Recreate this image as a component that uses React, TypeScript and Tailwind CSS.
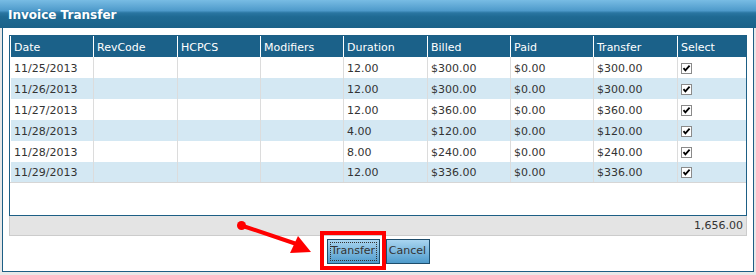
const rows = [
  { date: '11/25/2013', duration: '12.00', billed: '$300.00', paid: '$0.00', transfer: '$300.00' },
  { date: '11/26/2013', duration: '12.00', billed: '$300.00', paid: '$0.00', transfer: '$300.00' },
  { date: '11/27/2013', duration: '12.00', billed: '$360.00', paid: '$0.00', transfer: '$360.00' },
  { date: '11/28/2013', duration: '4.00', billed: '$120.00', paid: '$0.00', transfer: '$120.00' },
  { date: '11/28/2013', duration: '8.00', billed: '$240.00', paid: '$0.00', transfer: '$240.00' },
  { date: '11/29/2013', duration: '12.00', billed: '$336.00', paid: '$0.00', transfer: '$336.00' },
]

const headers = ['Date', 'RevCode', 'HCPCS', 'Modifiers', 'Duration', 'Billed', 'Paid', 'Transfer', 'Select']
const widths = ['w-[83px]', 'w-[84px]', 'w-[83px]', 'w-[83px]', 'w-[84px]', 'w-[83px]', 'w-[83px]', 'w-[84px]', 'w-[69px]']

function CheckBox() {
  return (
    <svg width="11" height="11" viewBox="0 0 11 11">
      <rect x="0.5" y="0.5" width="10" height="10" fill="#fff" stroke="#8a8a8a" />
      <path d="M2.5 5.2 L4.4 7.4 L8.6 2.6" fill="none" stroke="#000" strokeWidth="1.8" />
    </svg>
  )
}

export default function App() {
  return (
    <div
      className="relative w-[756px] h-[275px] bg-[#e8e8e8] overflow-hidden text-[11px] text-[#333]"
      style={{ fontFamily: '"DejaVu Sans", Verdana, sans-serif' }}
    >
      <div className="h-[28px] flex items-center pl-2 pt-[2px] bg-[linear-gradient(to_bottom,#78bce4_0%,#4e9aca_38%,#2a76a2_46%,#1f6a93_60%,#1b6289_100%)]">
        <span className="text-white font-bold text-[12px]">Invoice Transfer</span>
      </div>

      <div className="mx-[2px] h-[244px] bg-white border-x border-b border-[#1d5f85] pt-[7px] px-[6px]">
        <div className="h-[181px] border border-[#1d5f85] bg-white">
          <div className="flex h-[21px] bg-[#1b6189] text-white">
            {headers.map((h, i) => (
              <div key={h} className={`${widths[i]} border-l border-white flex items-center pl-[3px] pt-[3px]`}>
                {h}
              </div>
            ))}
          </div>
          {rows.map((r, ri) => (
            <div
              key={ri}
              className={`flex h-[21px] ${ri % 2 === 1 ? 'bg-[#d4e8f3]' : 'bg-white'} ${ri === rows.length - 1 ? 'border-b border-[#d6d6d6]' : ''}`}
            >
              {[r.date, '', '', '', r.duration, r.billed, r.paid, r.transfer].map((c, ci) => (
                <div
                  key={ci}
                  className={`${widths[ci]} border-l ${ci === 0 ? 'border-white' : 'border-[#dcdcdc]'} flex items-center pl-[3px] pt-[3px]`}
                >
                  {c}
                </div>
              ))}
              <div className={`${widths[8]} border-l border-[#dcdcdc] flex items-center pl-[3px] pt-[1px]`}>
                <CheckBox />
              </div>
            </div>
          ))}
        </div>

        <div className="h-[20px] bg-[#e4e4e4] border-x border-b border-[#cccccc] flex items-center justify-end pr-[3px] pt-[2px]">
          1,656.00
        </div>

        <div className="flex justify-center gap-[6px] mt-[3px]">
          <button className="w-[53px] h-[25px] border border-[#1e4d6b] bg-[linear-gradient(to_bottom,#a9d5f0,#4f9bcc)] text-[#333] text-[11px] p-[2px]">
            <span className="flex h-full items-center justify-center border border-dotted border-[#333]">Transfer</span>
          </button>
          <button className="w-[44px] h-[25px] border border-[#1e4d6b] bg-[linear-gradient(to_bottom,#a9d5f0,#4f9bcc)] text-[#333] text-[11px]">
            Cancel
          </button>
        </div>
      </div>

      <div className="absolute left-[320px] top-[231px] w-[66px] h-[39px] border-[4px] border-[#ff0000]" />

      <svg className="absolute left-0 top-0" width="756" height="275">
        <circle cx="241.5" cy="225.5" r="4.5" fill="#ff0000" />
        <line x1="241.5" y1="225.5" x2="298" y2="244.5" stroke="#ff0000" strokeWidth="4" />
        <polygon points="311,252 290,253 298,236" fill="#ff0000" />
      </svg>
    </div>
  )
}
